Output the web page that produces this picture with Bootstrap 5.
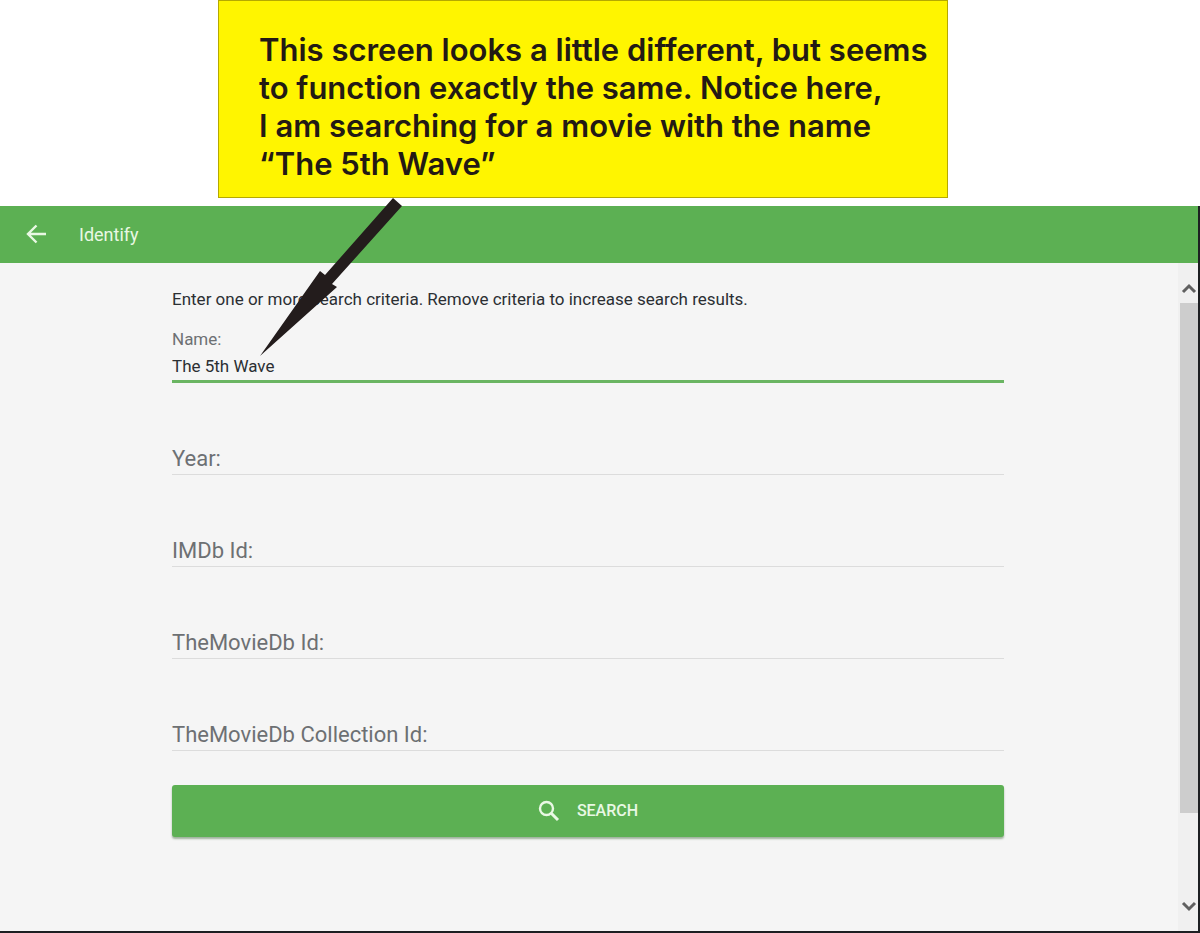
<!DOCTYPE html>
<html lang="en">
<head>
<meta charset="utf-8">
<meta name="viewport" content="width=device-width, initial-scale=1">
<title>Identify</title>
<link href="https://cdn.jsdelivr.net/npm/bootstrap@5.3.0/dist/css/bootstrap.min.css" rel="stylesheet">
<style>
  body { font-family: Roboto, "Liberation Sans", sans-serif; font-size: 17px; line-height: 24px; color: #2b2f33; background: #fff; }
  .note-row { padding-left: 218px; padding-bottom: 8px; }
  .note { width: 730px; max-width: 100%; padding: 30px 10px 14px 40px; background: #fff500; border: 1px solid #b5a900; color: #231a14;
    font-family: Inter, "Liberation Sans", sans-serif; font-weight: 600; font-size: 31px; line-height: 38px; margin: 0; }
  .note-arrow { position: absolute; left: 40px; top: 196px; z-index: 3; pointer-events: none; }
  .app { background: #f5f5f5; border-right: 2px solid #1d1f22; border-bottom: 2px solid #1d1f22; }
  .app-bar { height: 57px; background: #5cb053; color: #e9f8e4; padding-left: 24px; gap: 31px; }
  .app-bar h1 { font-size: 18px; line-height: 24px; font-weight: 400; }
  .app-main { padding-right: 2px; }
  .criteria { width: 832px; max-width: 100%; padding-top: 24px; }
  .criteria-label { color: #6d7073; }
  .line-input { border: 0; border-bottom: 1px solid #dcdcdc; border-radius: 0; background: transparent; padding: 0; font-size: 17px; line-height: 24px; color: #2b2f33; height: 36px; }
  .line-input:focus { background: transparent; box-shadow: none; border-color: #5cb053; }
  .line-input.active-line { height: 32px; border-bottom: 3px solid #6ab562; }
  .stacked { display: grid; padding-top: 56px; }
  .stacked > * { grid-area: 1 / 1; }
  .stacked label { font-size: 22px; line-height: 40px; height: 36px; }
  .btn-search { height: 52px; margin-top: 34px; border: 0; border-radius: 3px; background: #5cb053; color: #e9f8e4; font-size: 16px; font-weight: 500; gap: 17px; box-shadow: 0 2px 2px #9fb39c; }
  .btn-search:hover { background: #52a349; color: #fff; }
  .scroll-track { width: 20px; background: #f0f0f0; padding: 18px 0 17px; }
  .scroll-thumb { width: 18px; flex: 510 0 0; margin-top: 8px; background: #cdcdcd; }
  .scroll-space { flex: 87 0 0; }
</style>
</head>
<body class="d-flex flex-column min-vh-100">
  <div class="note-row">
    <div class="position-relative">
      <p class="note">This screen looks a little different, but seems<br>to function exactly the same. Notice here,<br>I am searching for a movie with the name<br>“The 5th Wave”</p>
      <svg class="note-arrow" width="146" height="162" viewBox="258 196 146 162" aria-hidden="true"><path fill="#231c1c" d="M393 198l9 8-70 78 5 3-77 69 60-85 5 4z"/></svg>
    </div>
  </div>
  <div class="app d-flex flex-column flex-fill">
    <header class="app-bar d-flex align-items-center">
      <button type="button" class="btn p-0 border-0 d-flex" aria-label="Back">
        <svg width="24" height="24" viewBox="0 0 24 24" fill="none" stroke="#e9f8e4" stroke-width="2.4"><path d="M22 11H4.500M12.500 2.500L4 11l8.500 8.500"/></svg>
      </button>
      <h1 class="m-0">Identify</h1>
    </header>
    <div class="d-flex flex-fill">
      <main class="app-main flex-fill">
        <form class="criteria mx-auto" onsubmit="return false">
          <p class="m-0">Enter one or more search criteria. Remove criteria to increase search results.</p>
          <div class="pt-3">
            <label class="criteria-label d-block" for="name">Name:</label>
            <input class="form-control line-input active-line" id="name" type="text" value="The 5th Wave">
          </div>
          <div class="stacked"><label class="criteria-label" for="year">Year:</label><input class="form-control line-input" id="year" type="text"></div>
          <div class="stacked"><label class="criteria-label" for="imdb">IMDb Id:</label><input class="form-control line-input" id="imdb" type="text"></div>
          <div class="stacked"><label class="criteria-label" for="tmdb">TheMovieDb Id:</label><input class="form-control line-input" id="tmdb" type="text"></div>
          <div class="stacked"><label class="criteria-label" for="collection">TheMovieDb Collection Id:</label><input class="form-control line-input" id="collection" type="text"></div>
          <button type="submit" class="btn btn-search w-100 d-flex align-items-center justify-content-center">
            <svg width="22" height="22" viewBox="0 0 22 22" fill="none" stroke="#e9f8e4" stroke-width="2.400"><circle cx="8.500" cy="8.500" r="6.500"/><path stroke-width="3" d="M13.500 13.500l6.500 6.500"/></svg>
            SEARCH
          </button>
        </form>
      </main>
      <div class="scroll-track d-flex flex-column align-items-end" aria-hidden="true">
        <svg width="18" height="14" viewBox="0 0 18 14" fill="none" stroke="#606060" stroke-width="3"><path d="M3 11l6-6 6 6"/></svg>
        <div class="scroll-thumb"></div>
        <div class="scroll-space"></div>
        <svg width="18" height="14" viewBox="0 0 18 14" fill="none" stroke="#606060" stroke-width="3"><path d="M3 3l6 6 6-6"/></svg>
      </div>
    </div>
  </div>
<script src="https://cdn.jsdelivr.net/npm/bootstrap@5.3.0/dist/js/bootstrap.bundle.min.js"></script>
</body>
</html>
